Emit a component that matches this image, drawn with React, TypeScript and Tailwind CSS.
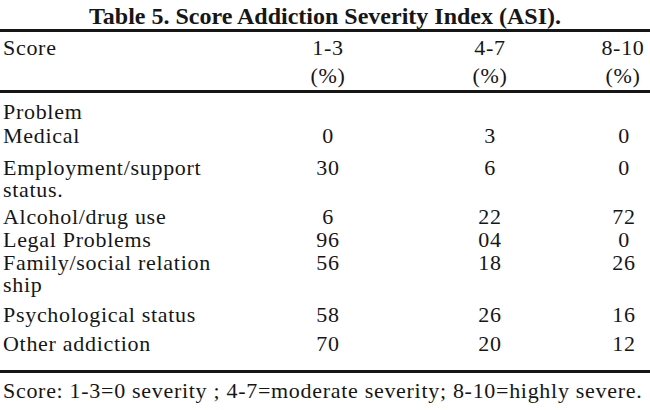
import React from "react";

type Row = { label: string[]; a: string; b: string; c: string; pt: string };

const rows: Row[] = [
  { label: ["Problem"], a: "", b: "", c: "", pt: "pt-[8px]" },
  { label: ["Medical"], a: "0", b: "3", c: "0", pt: "pt-[2px]" },
  { label: ["Employment/support", "status."], a: "30", b: "6", c: "0", pt: "pt-[10px]" },
  { label: ["Alcohol/drug use"], a: "6", b: "22", c: "72", pt: "pt-[5px]" },
  { label: ["Legal Problems"], a: "96", b: "04", c: "0", pt: "pt-[1px]" },
  { label: ["Family/social relation", "ship"], a: "56", b: "18", c: "26", pt: "pt-[1px]" },
  { label: ["Psychological status"], a: "58", b: "26", c: "16", pt: "pt-[8px]" },
  { label: ["Other addiction"], a: "70", b: "20", c: "12", pt: "pt-[7px]" },
];

export default function App() {
  return (
    <div
      className="w-[650px] h-[410px] overflow-hidden bg-white text-[#161616]"
      style={{ fontFamily: '"Liberation Serif", "Times New Roman", serif' }}
    >
      <div className="h-[29px] pt-[1px] text-center text-[24px] leading-[30px] font-bold">
        Table 5. Score Addiction Severity Index (ASI).
      </div>
      <div className="h-[3px] bg-[#161616]" />
      <div className="grid grid-cols-[256px_144px_180px_70px] pt-[2px] text-[22px] tracking-[0.7px] leading-[28px] h-[58px]">
        <div className="pl-[3px]">Score</div>
        <div className="text-center">
          1-3
          <br />
          (%)
        </div>
        <div className="text-center">
          4-7
          <br />
          (%)
        </div>
        <div className="text-center pl-[16px]">
          8-10
          <br />
          (%)
        </div>
      </div>
      <div className="h-[3px] bg-[#161616]" />
      <div className="text-[22px] tracking-[0.7px] leading-[22px]">
        {rows.map((r, i) => (
          <div key={i} className={`grid grid-cols-[256px_144px_180px_70px] ${r.pt}`}>
            <div className="pl-[3px]">
              {r.label.map((l, j) => (
                <div key={j}>{l}</div>
              ))}
            </div>
            <div className="text-center">{r.a}</div>
            <div className="text-center">{r.b}</div>
            <div className="text-center pl-[18px]">{r.c}</div>
          </div>
        ))}
      </div>
      <div className="mt-[15px] h-[3px] bg-[#161616]" />
      <div className="pt-[7px] pl-[3px] text-[22px] tracking-[0.7px] leading-[22px] whitespace-nowrap">
        Score: 1-3=0 severity ; 4-7=moderate severity; 8-10=highly severe.
      </div>
    </div>
  );
}
